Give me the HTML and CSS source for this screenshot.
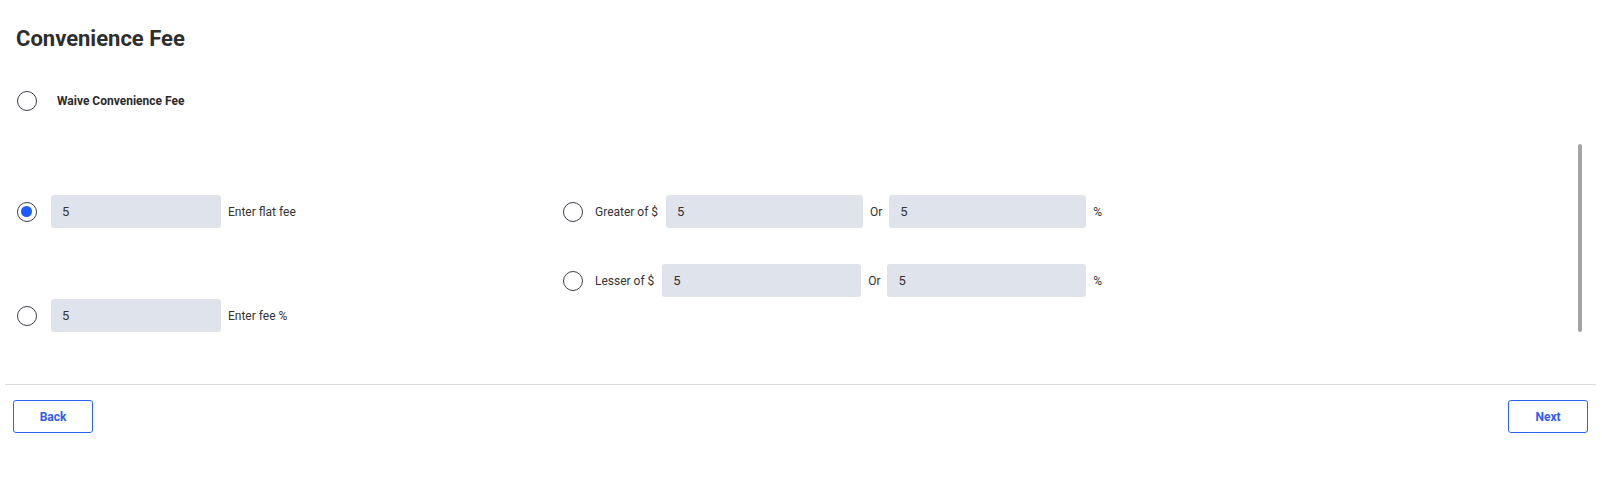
FILE: index.html
```html
<!DOCTYPE html>
<html lang="en">
<head>
<meta charset="UTF-8" />
<meta name="viewport" content="width=device-width, initial-scale=1" />
<title>Convenience Fee</title>
<link rel="stylesheet" href="styles.css">
</head>
<body>

<h1 class="title">Convenience Fee</h1>

<label class="waive">
  <input type="radio" name="fee" class="radio" />
  <span>Waive Convenience Fee</span>
</label>

<div class="scroll-area">
  <div class="fields">
    <div class="col-left">
      <div class="row">
        <input type="radio" name="fee" class="radio" checked />
        <input type="text" class="field field-left" value="5" />
        <span class="hint">Enter flat fee</span>
      </div>
      <div class="row">
        <input type="radio" name="fee" class="radio" />
        <input type="text" class="field field-left" value="5" />
        <span class="hint">Enter fee %</span>
      </div>
    </div>

    <div class="col-right">
      <div class="row row-wide">
        <input type="radio" name="fee" class="radio" />
        <span class="hint hint-lead">Greater of $</span>
        <input type="text" class="field field-grow" value="5" />
        <span class="hint">Or</span>
        <input type="text" class="field field-grow" value="5" />
        <span class="hint">%</span>
      </div>
      <div class="row row-wide">
        <input type="radio" name="fee" class="radio" />
        <span class="hint hint-lead">Lesser of $</span>
        <input type="text" class="field field-grow" value="5" />
        <span class="hint">Or</span>
        <input type="text" class="field field-grow" value="5" />
        <span class="hint">%</span>
      </div>
    </div>
  </div>
  <div class="scrollbar"></div>
</div>

<div class="divider"></div>

<div class="footer">
  <button type="button" class="btn">Back</button>
  <button type="button" class="btn">Next</button>
</div>

</body>
</html>
```

FILE: styles.css
```css
body {
  margin: 0;
  font-family: Roboto, 'Liberation Sans', sans-serif;
  color: #333;
  background: #fff;
}
.title {
  margin: 25px 0 0 16px;
  font-size: 22px;
  line-height: 28px;
  font-weight: 700;
  color: #2e2e2e;
}

/* radios */
.radio {
  appearance: none;
  -webkit-appearance: none;
  margin: 0;
  width: 20px;
  height: 20px;
  flex: none;
  border: 1.5px solid #3a3f48;
  border-radius: 50%;
  background: #fff;
  position: relative;
}
.radio:checked::after {
  content: '';
  position: absolute;
  left: 3px;
  top: 3px;
  width: 11px;
  height: 11px;
  border-radius: 50%;
  background: #1c5cff;
}

.waive {
  display: flex;
  align-items: center;
  gap: 20px;
  height: 20px;
  margin: 38px 0 0 17px;
  font-size: 12px;
  font-weight: 700;
  color: #2b2b2b;
}

.scroll-area {
  display: flex;
  height: 205px;
  margin-top: 29px;
}
.fields {
  flex: 1;
  display: flex;
  padding: 55px 0 0 17px;
}
.col-left {
  width: 546px;
  display: flex;
  flex-direction: column;
  gap: 71px;
}
.col-right {
  display: flex;
  flex-direction: column;
  gap: 36px;
}
.row {
  display: flex;
  align-items: center;
  gap: 7px;
  height: 33px;
}
.row .radio { margin-right: 7px; }
.row-wide {
  width: 539px;
  gap: 7px;
}
.row-wide .radio { margin-right: 5px; }
.hint {
  font-size: 12px;
  color: #333;
  white-space: nowrap;
}
.hint-lead { margin-right: 1px; }

.field {
  height: 33px;
  box-sizing: border-box;
  border: none;
  border-radius: 3px;
  background: #dfe3eb;
  padding: 0 11px;
  font-family: inherit;
  font-size: 13px;
  color: #333;
  outline: none;
}
.field-left { width: 170px; }
.field-grow {
  flex: 1;
  min-width: 0;
  width: 0;
}

.scrollbar {
  width: 4px;
  margin: 4px 20px 13px 0;
  border-radius: 2px;
  background: #a3a3a3;
}

.divider {
  height: 1px;
  margin: 39px 6px 0 5px;
  background: #dcdcdc;
}

.footer {
  display: flex;
  justify-content: space-between;
  padding: 15px 14px 0 13px;
}
.btn {
  width: 80px;
  height: 33px;
  border: 1px solid #2a62f5;
  border-radius: 3px;
  background: #fff;
  color: #2f5bf0;
  font-family: inherit;
  font-size: 12px;
  font-weight: 700;
  cursor: pointer;
}
```
